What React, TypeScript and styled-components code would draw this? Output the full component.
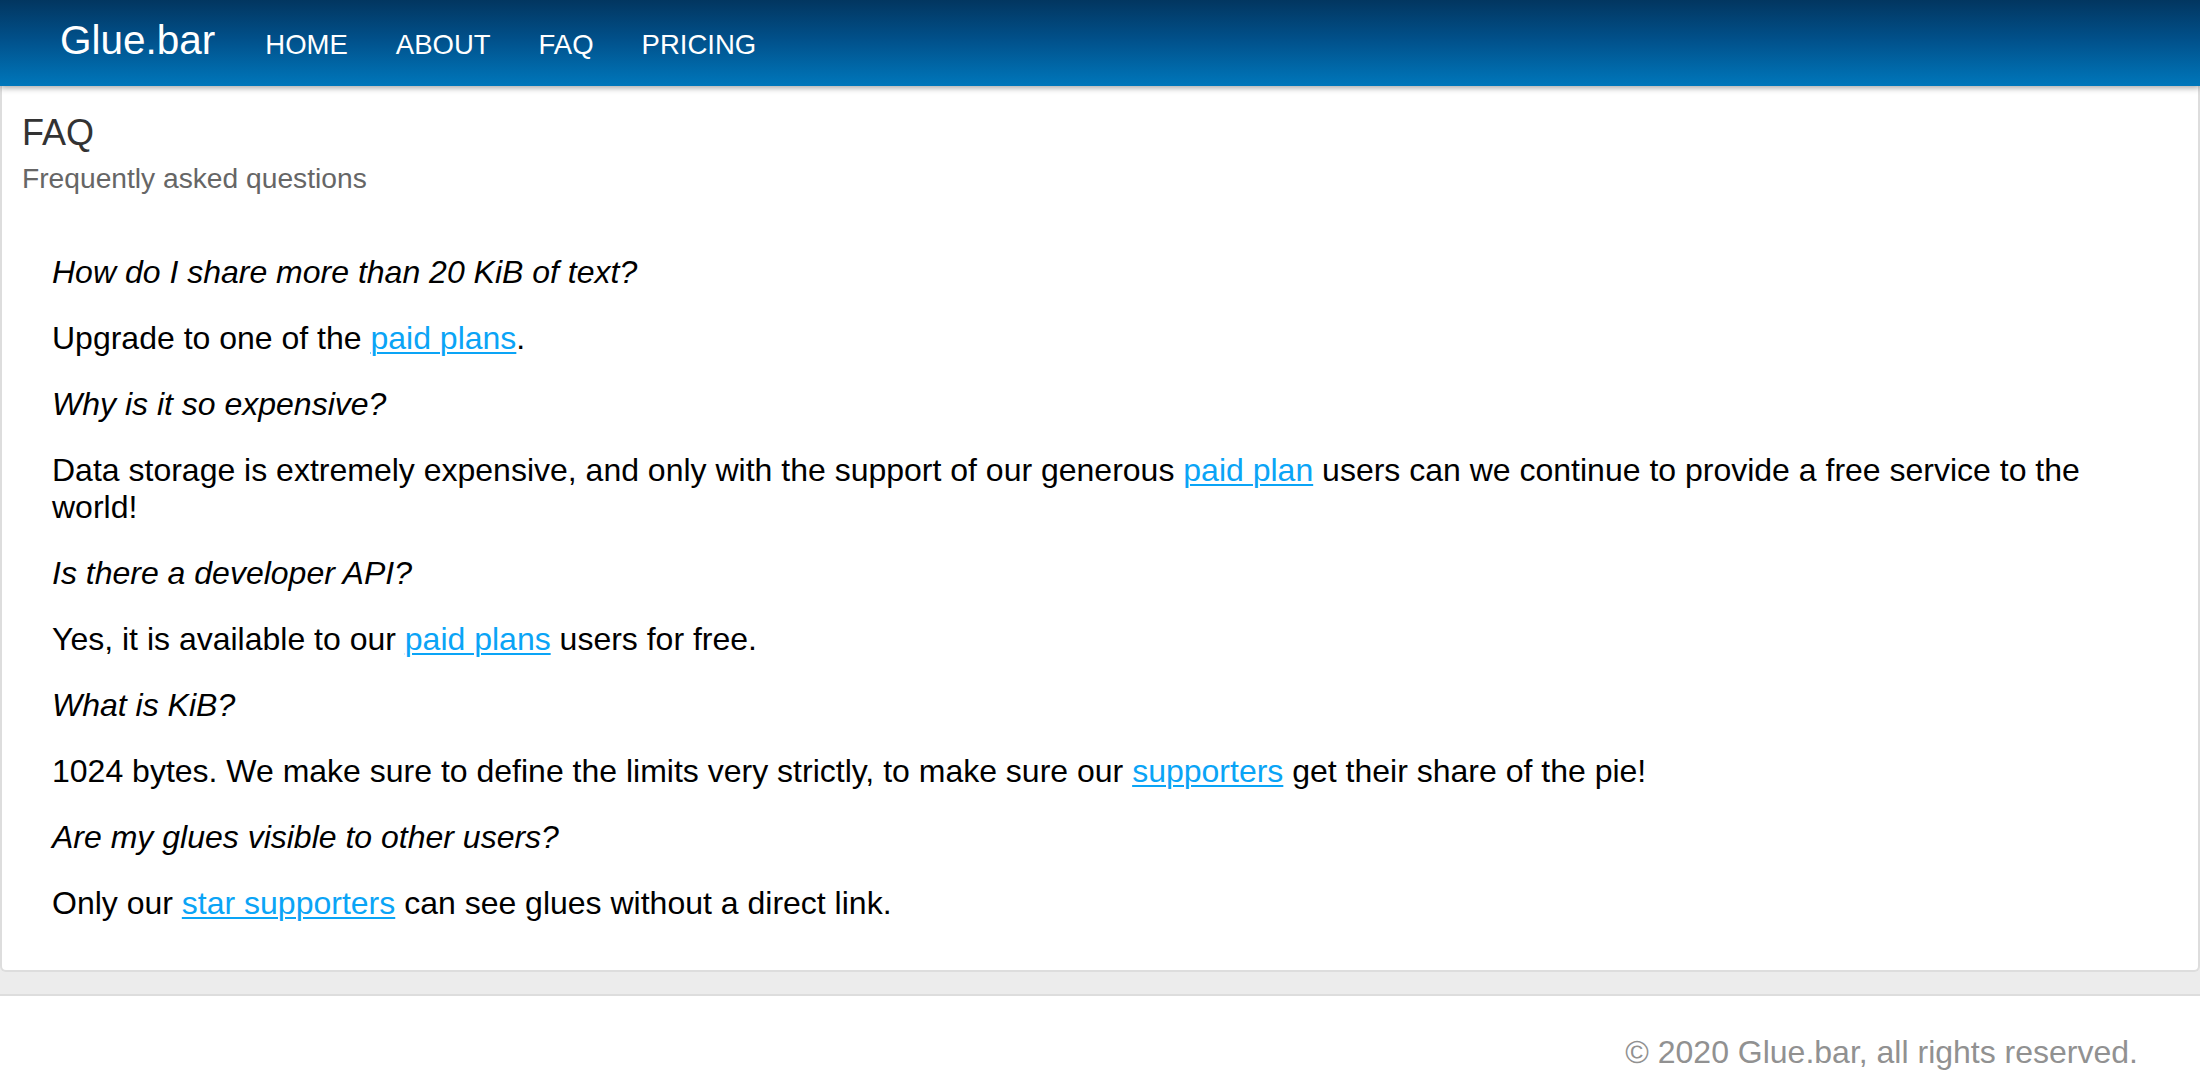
import React from "react";
import styled, { createGlobalStyle } from "styled-components";

const GlobalStyle = createGlobalStyle`
  html, body {
    margin: 0;
    padding: 0;
    background: #ffffff;
  }
  body {
    font-family: "Liberation Sans", Arial, Helvetica, sans-serif;
    color: #000;
  }
  * { box-sizing: border-box; }
`;

const Header = styled.header`
  position: relative;
  z-index: 2;
  height: 86px;
  display: flex;
  align-items: baseline;
  padding: 12px 0 0 60px;
  background: linear-gradient(to bottom, #023660 0%, #01508a 45%, #0077bb 100%);
  box-shadow: 0 2px 6px rgba(0, 0, 0, 0.35);
`;

const Brand = styled.a`
  font-size: 40.5px;
  line-height: 56px;
  color: #fff;
  text-decoration: none;
  margin-right: 26px;
`;

const NavLink = styled.a`
  font-size: 27.5px;
  line-height: 56px;
  color: #fff;
  text-decoration: none;
  padding: 0 24px;
  text-transform: uppercase;
`;

const Main = styled.main`
  background: #ececec;
  padding-bottom: 22px;
  border-bottom: 2px solid #dddddd;
`;

const Card = styled.section`
  background: #fff;
  border: 2px solid #dddddd;
  border-top: none;
  border-radius: 0 0 6px 6px;
  padding: 27px 20px 48px 20px;
`;

const Title = styled.h1`
  margin: 0;
  font-size: 36px;
  line-height: 40px;
  font-weight: normal;
  color: #333;
`;

const Subtitle = styled.p`
  margin: 9px 0 0;
  font-size: 28.2px;
  line-height: 32px;
  color: #666;
`;

const FaqList = styled.div`
  display: flex;
  flex-direction: column;
  gap: 29px;
  padding: 60px 30px 0 30px;
`;

const Question = styled.p<{ $italic?: boolean }>`
  margin: 0;
  font-size: 32px;
  line-height: 37px;
  font-style: ${(p) => (p.$italic ? "italic" : "normal")};
  color: #000;
`;

const Link = styled.a`
  color: #0aa4f6;
  text-decoration: underline;
  text-underline-offset: 3px;
  text-decoration-thickness: 2px;
`;

const Footer = styled.footer`
  background: #fff;
  padding: 38px 62px 20px 0;
  text-align: right;
  font-size: 32px;
  line-height: 37px;
  color: #919191;
`;

export default function App() {
  return (
    <>
      <GlobalStyle />
      <Header>
        <Brand href="#">Glue.bar</Brand>
        <NavLink href="#">Home</NavLink>
        <NavLink href="#">About</NavLink>
        <NavLink href="#">FAQ</NavLink>
        <NavLink href="#">Pricing</NavLink>
      </Header>
      <Main>
        <Card>
          <Title>FAQ</Title>
          <Subtitle>Frequently asked questions</Subtitle>
          <FaqList>
            <Question $italic>How do I share more than 20 KiB of text?</Question>
            <Question>
              Upgrade to one of the <Link href="#">paid plans</Link>.
            </Question>
            <Question $italic>Why is it so expensive?</Question>
            <Question>
              Data storage is extremely expensive, and only with the support of our generous{" "}
              <Link href="#">paid plan</Link> users can we continue to provide a free service to the world!
            </Question>
            <Question $italic>Is there a developer API?</Question>
            <Question>
              Yes, it is available to our <Link href="#">paid plans</Link> users for free.
            </Question>
            <Question $italic>What is KiB?</Question>
            <Question>
              1024 bytes. We make sure to define the limits very strictly, to make sure our{" "}
              <Link href="#">supporters</Link> get their share of the pie!
            </Question>
            <Question $italic>Are my glues visible to other users?</Question>
            <Question>
              Only our <Link href="#">star supporters</Link> can see glues without a direct link.
            </Question>
          </FaqList>
        </Card>
      </Main>
      <Footer>© 2020 Glue.bar, all rights reserved.</Footer>
    </>
  );
}
